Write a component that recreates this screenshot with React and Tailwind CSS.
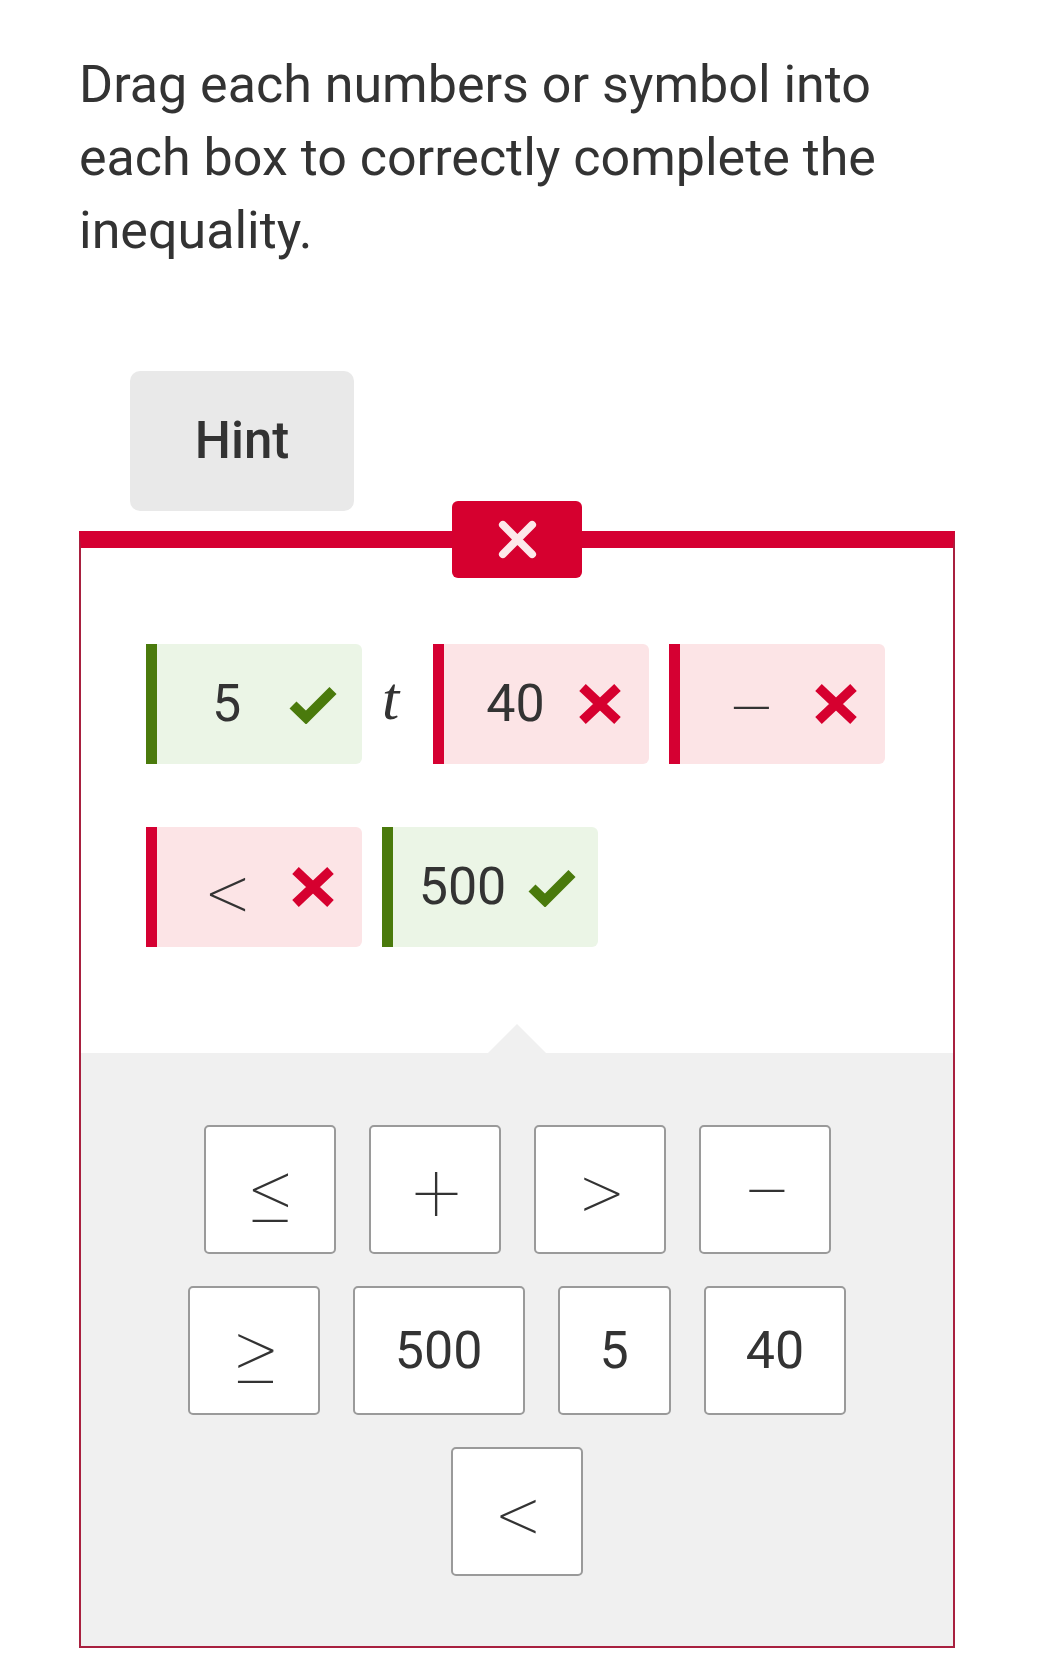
import React from 'react';
import clsx from 'clsx';

const sym = "font-['Roboto','Liberation_Sans',sans-serif] font-thin";

const Cross = ({ className }) => (
  <svg viewBox="0 0 44 42" className={className} aria-hidden="true">
    <path d="M4.5 4.5 L39.5 37.5 M39.5 4.5 L4.5 37.5" stroke="currentColor" strokeWidth="9.5" fill="none" />
  </svg>
);

const Check = ({ className }) => (
  <svg viewBox="0 0 48 40" className={className} aria-hidden="true">
    <path d="M4 21 L17 33.5 L44 6.5" stroke="currentColor" strokeWidth="10" fill="none" />
  </svg>
);

const Answer = ({ value, ok, symbol }) => (
  <div
    className={clsx(
      'flex h-[120px] w-[216px] overflow-hidden rounded-r-[6px]',
      ok ? 'bg-[#ebf5e6]' : 'bg-[#fce4e6]'
    )}
  >
    <div className={clsx('w-[11px] shrink-0', ok ? 'bg-[#4a7a0c]' : 'bg-[#d50032]')} />
    <div className="flex flex-1 items-center justify-center gap-[22px] pl-[4px]">
      <span
        className={clsx(
          'min-w-[80px] text-center leading-none',
          symbol ? clsx(sym, 'translate-y-[6px] text-[86px]') : 'text-[52px]'
        )}
      >
        {value}
      </span>
      {ok ? (
        <Check className="h-[40px] w-[48px] text-[#4a7a0c]" />
      ) : (
        <Cross className="h-[42px] w-[44px] text-[#d6002f]" />
      )}
    </div>
  </div>
);

const Tile = ({ value, symbol }) => (
  <div className="flex h-[129px] items-center justify-center rounded-[5px] border-2 border-[#9a9a9a] bg-white px-[40px]">
    {symbol ? (
      <span className={clsx(sym, 'inline-block w-[48px] translate-x-[2px] translate-y-[3px] text-center text-[86px] leading-none')}>
        {value}
      </span>
    ) : (
      <span className="text-[52px] leading-none">{value}</span>
    )}
  </div>
);

const bank = [
  { value: '≤', symbol: true },
  { value: '+', symbol: true },
  { value: '>', symbol: true },
  { value: '−', symbol: true },
  { value: '≥', symbol: true },
  { value: '500' },
  { value: '5' },
  { value: '40' },
  { value: '<', symbol: true },
];

export default function App() {
  return (
    <div className="min-h-[1656px] w-full bg-white pl-[79px] pr-[82px] pt-[48px] font-['Roboto','Liberation_Sans',sans-serif] text-[#333]">
      <p className="text-[52px] leading-[73px]">
        Drag each numbers or symbol into each box to correctly complete the inequality.
      </p>

      <button
        type="button"
        className="ml-[51px] mt-[104px] h-[140px] w-[224px] rounded-[10px] bg-[#e9e9e9] text-[51px] font-medium text-[#333]"
      >
        Hint
      </button>

      <div className="relative mt-[20px] border-x-2 border-b-2 border-t-[17px] border-[#a8203f] border-t-[#d50032]">
        <div className="absolute left-1/2 top-[-47px] flex h-[77px] w-[130px] -translate-x-1/2 items-center justify-center rounded-[6px] bg-[#d6002f]">
          <svg viewBox="0 0 42 42" className="h-[41px] w-[41px]" aria-hidden="true">
            <path
              d="M6 6 L36 36 M36 6 L6 36"
              stroke="#fde8ea"
              strokeWidth="8"
              strokeLinecap="round"
              fill="none"
            />
          </svg>
        </div>

        <div className="flex flex-col gap-[63px] pb-[106px] pl-[65px] pt-[96px]">
          <div className="flex items-center">
            <Answer value="5" ok />
            <span className="mx-[20px] inline-block w-[31px] -translate-y-[6px] font-['Liberation_Serif',serif] text-[62px] italic leading-none">
              t
            </span>
            <Answer value="40" />
            <div className="ml-[20px]">
              <Answer value="−" symbol />
            </div>
          </div>
          <div className="flex items-center gap-[20px]">
            <Answer value="<" symbol />
            <Answer value="500" ok />
          </div>
        </div>

        <div className="relative bg-[#f0f0f0] pb-[70px] pt-[72px]">
          <div className="absolute left-1/2 top-[-29px] h-0 w-0 -translate-x-1/2 border-x-[29px] border-b-[29px] border-x-transparent border-b-[#f0f0f0]" />
          <div className="mx-auto flex w-[720px] flex-wrap justify-center gap-x-[33px] gap-y-[32px]">
            {bank.map((t, i) => (
              <Tile key={i} value={t.value} symbol={t.symbol} />
            ))}
          </div>
        </div>
      </div>
    </div>
  );
}
